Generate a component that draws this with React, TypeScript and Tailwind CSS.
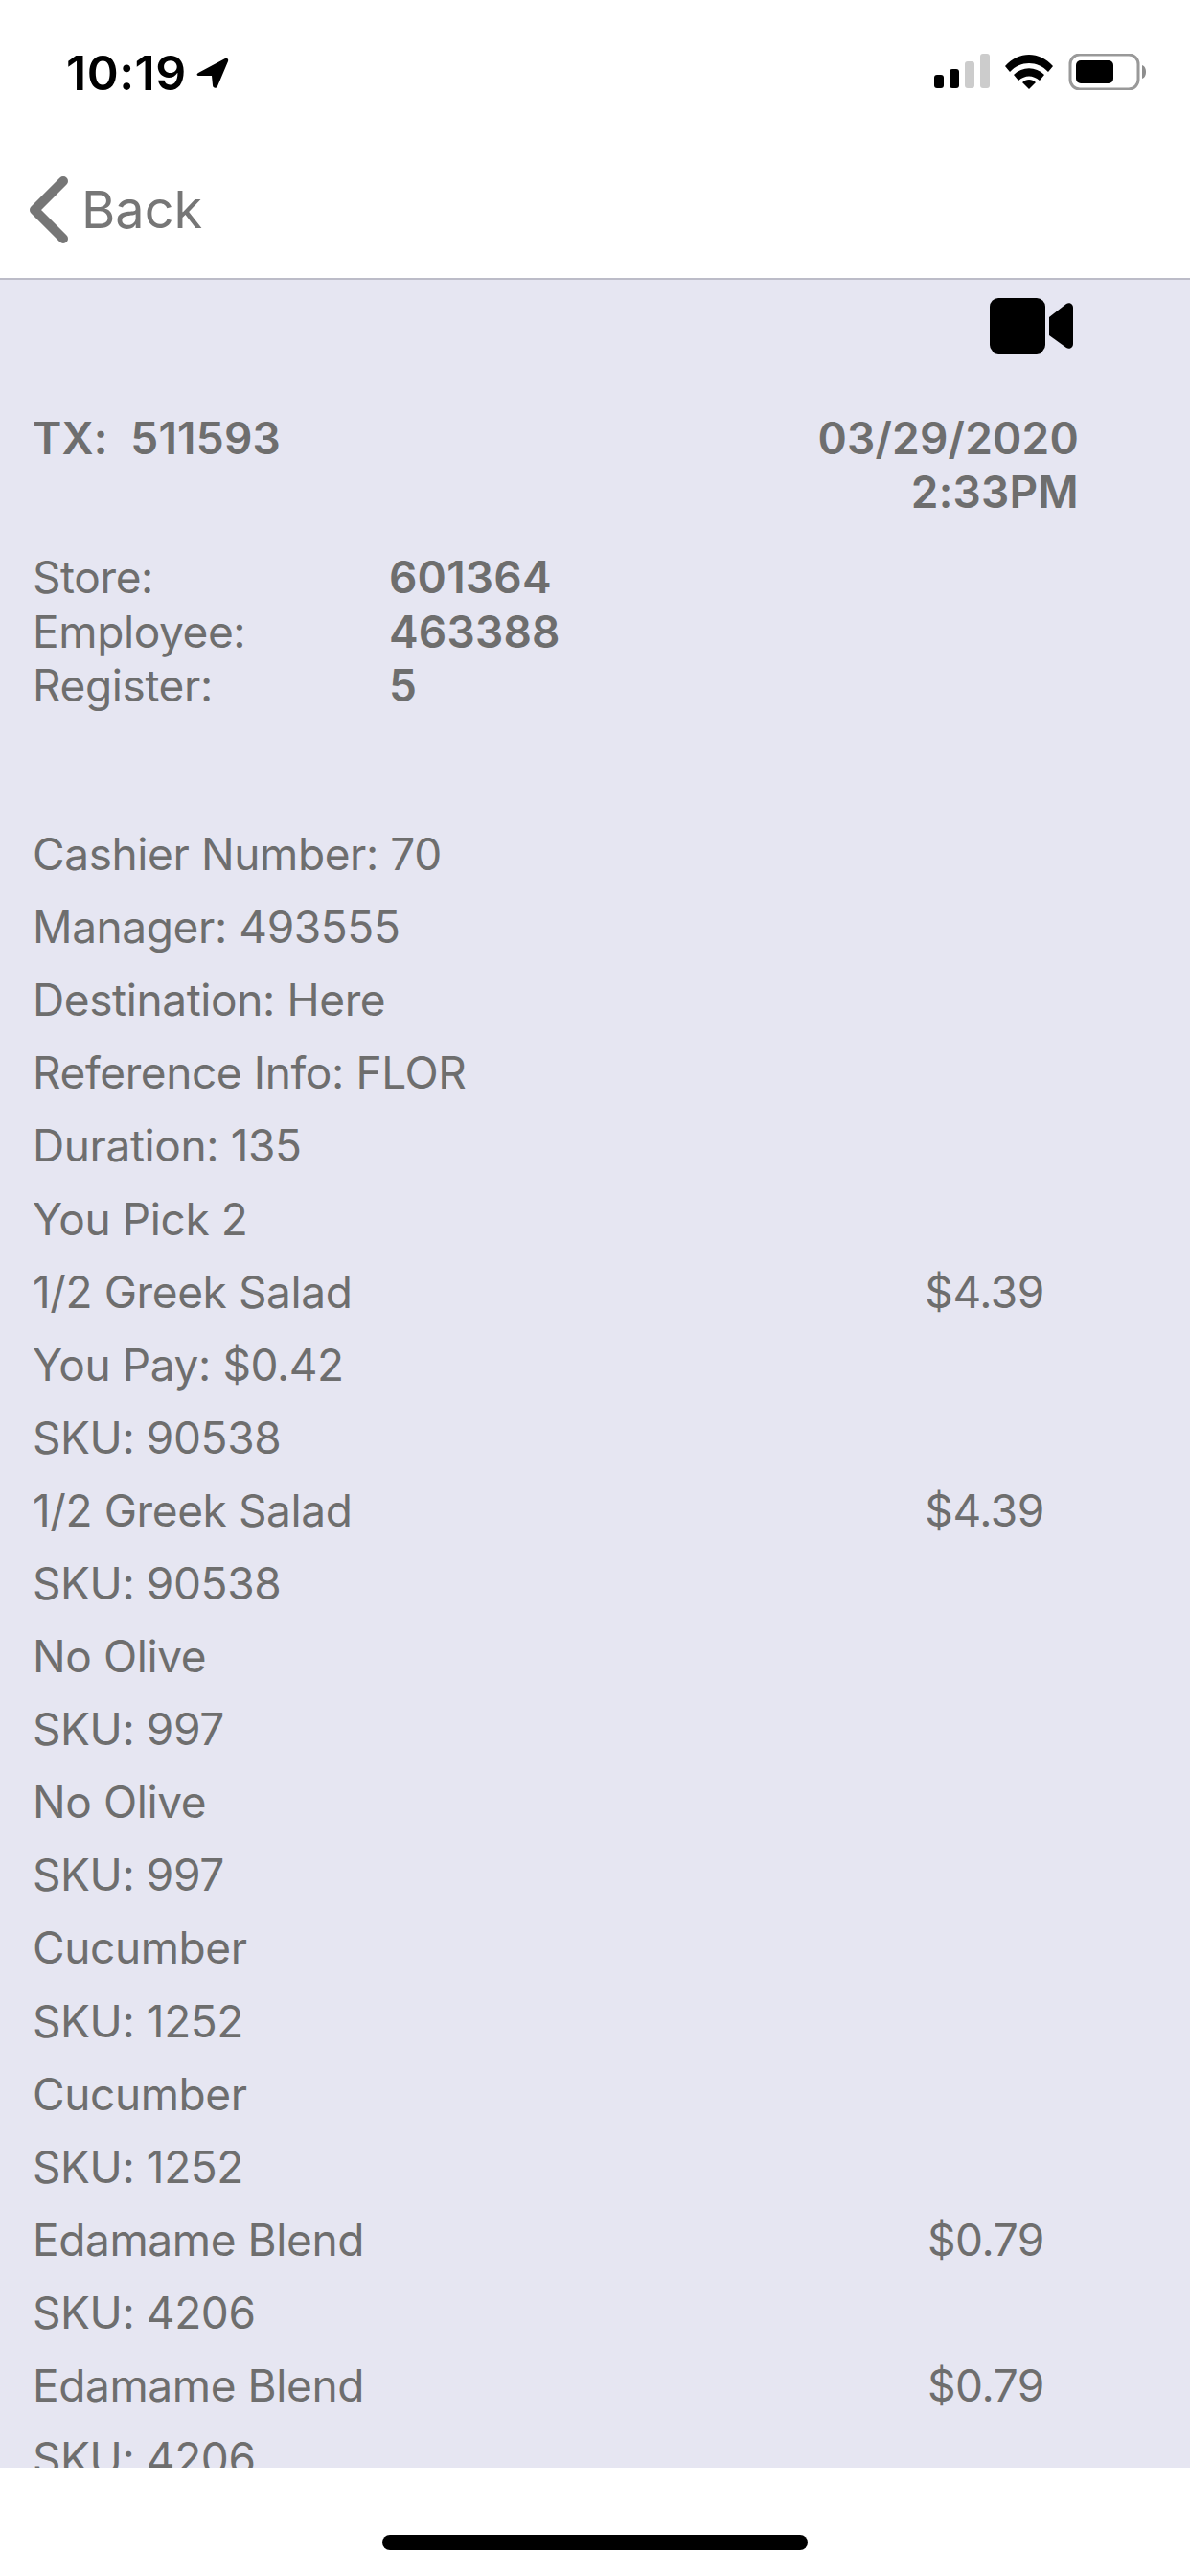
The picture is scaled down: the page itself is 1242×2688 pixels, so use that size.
import React from 'react';

type Row = { label: string; price?: string };

const rows: Row[] = [
  { label: 'Cashier Number: 70' },
  { label: 'Manager: 493555' },
  { label: 'Destination: Here' },
  { label: 'Reference Info: FLOR' },
  { label: 'Duration: 135' },
  { label: 'You Pick 2' },
  { label: '1/2 Greek Salad', price: '$4.39' },
  { label: 'You Pay: $0.42' },
  { label: 'SKU: 90538' },
  { label: '1/2 Greek Salad', price: '$4.39' },
  { label: 'SKU: 90538' },
  { label: 'No Olive' },
  { label: 'SKU: 997' },
  { label: 'No Olive' },
  { label: 'SKU: 997' },
  { label: 'Cucumber' },
  { label: 'SKU: 1252' },
  { label: 'Cucumber' },
  { label: 'SKU: 1252' },
  { label: 'Edamame Blend', price: '$0.79' },
  { label: 'SKU: 4206' },
  { label: 'Edamame Blend', price: '$0.79' },
  { label: 'SKU: 4206' },
];

const meta = [
  { label: 'Store:', value: '601364' },
  { label: 'Employee:', value: '463388' },
  { label: 'Register:', value: '5' },
];

function StatusIcons() {
  return (
    <svg width="222" height="38" viewBox="0 0 222 38" className="block">
      <rect x="0" y="22" width="10" height="14" rx="3" fill="#000" />
      <rect x="16" y="16" width="10" height="20" rx="3" fill="#000" />
      <rect x="32" y="8" width="10" height="28" rx="3" fill="#cccccc" />
      <rect x="48" y="0" width="10" height="36" rx="3" fill="#cccccc" />
      <path d="M74 13 C88 -3 110 -3 124 13 L119 19 C108 7 90 7 79 19 Z" fill="#000" />
      <path d="M83 22 C92 13 106 13 115 22 L110 28 C103 22 95 22 88 28 Z" fill="#000" />
      <path d="M92 30 C96 26 102 26 106 30 L99 37 Z" fill="#000" />
      <rect x="142" y="1" width="71" height="36" rx="10" fill="none" stroke="#999999" strokeWidth="3" />
      <rect x="148" y="7" width="39" height="24" rx="5" fill="#000" />
      <path d="M217 12 C220 13 221 16 221 19 C221 22 220 25 217 26 Z" fill="#8e8e8e" />
    </svg>
  );
}

function VideoIcon() {
  return (
    <svg width="87" height="58" viewBox="0 0 87 58" className="block" fill="#000">
      <rect x="0" y="0" width="58" height="58" rx="9" />
      <path d="M62 20 L80 6 C83 4 87 6 87 10 L87 48 C87 52 83 54 80 52 L62 39 Z" />
    </svg>
  );
}

export default function App() {
  return (
    <div
      className="w-[1242px] h-[2688px] flex flex-col bg-white overflow-hidden text-[#6e6e6e]"
      style={{ fontFamily: 'Inter, "Liberation Sans", sans-serif' }}
    >
      {/* status bar */}
      <div className="h-[132px] shrink-0 flex items-start justify-between pl-[69px] pr-[45px] pt-[56px]">
        <div className="flex items-center gap-[10px] text-black">
          <span className="text-[50px] leading-[40px] font-semibold tracking-[0.5px]">10:19</span>
          <svg width="34" height="34" viewBox="0 0 34 34" fill="#000" className="block">
            <path d="M2 17 L30 2 C32 1 34 3 33 5 L22 31 C21 34 17 33 17 30 L16 20 L3 20 C0 20 0 18 2 17 Z" />
          </svg>
        </div>
        <StatusIcons />
      </div>

      {/* nav */}
      <div className="h-[160px] shrink-0 border-b-2 border-[#bcbcc8] flex items-start pl-[30px] pt-[52px]">
        <svg width="42" height="70" viewBox="0 0 42 70" className="block" fill="none">
          <path d="M36 5 L6 35 L36 65" stroke="#767676" strokeWidth="10" strokeLinecap="round" strokeLinejoin="round" />
        </svg>
        <span className="ml-[13px] text-[54px] leading-[70px] text-[#767676]">Back</span>
      </div>

      {/* receipt */}
      <div className="flex-1 min-h-0 overflow-hidden bg-[#e6e6f2]">
        <div className="flex justify-end pr-[122px] pt-[19px]">
          <VideoIcon />
        </div>
        <div className="flex justify-between pl-[34px] pr-[116px] mt-[60px] text-[46px] leading-[56px] font-semibold tracking-[0.2px]">
          <span className="whitespace-pre">TX:  511593</span>
          <div className="text-right">
            <div>03/29/2020</div>
            <div>2:33PM</div>
          </div>
        </div>
        <div className="pl-[34px] mt-[33px] text-[46px] leading-[56.5px] tracking-[-0.4px]">
          {meta.map((m) => (
            <div key={m.label} className="flex">
              <span className="w-[372px]">{m.label}</span>
              <span className="font-semibold tracking-[0.2px]">{m.value}</span>
            </div>
          ))}
        </div>
        <div className="mt-[110px] pl-[34px] pr-[152px] text-[46px] tracking-[-0.4px]">
          {rows.map((r, i) => (
            <div key={i} className="h-[76.1px] flex items-center justify-between">
              <span>{r.label}</span>
              {r.price && <span>{r.price}</span>}
            </div>
          ))}
        </div>
      </div>

      {/* home indicator */}
      <div className="h-[113px] shrink-0 bg-white flex justify-center pt-[70px]">
        <div className="w-[444px] h-[16px] rounded-full bg-black" />
      </div>
    </div>
  );
}
